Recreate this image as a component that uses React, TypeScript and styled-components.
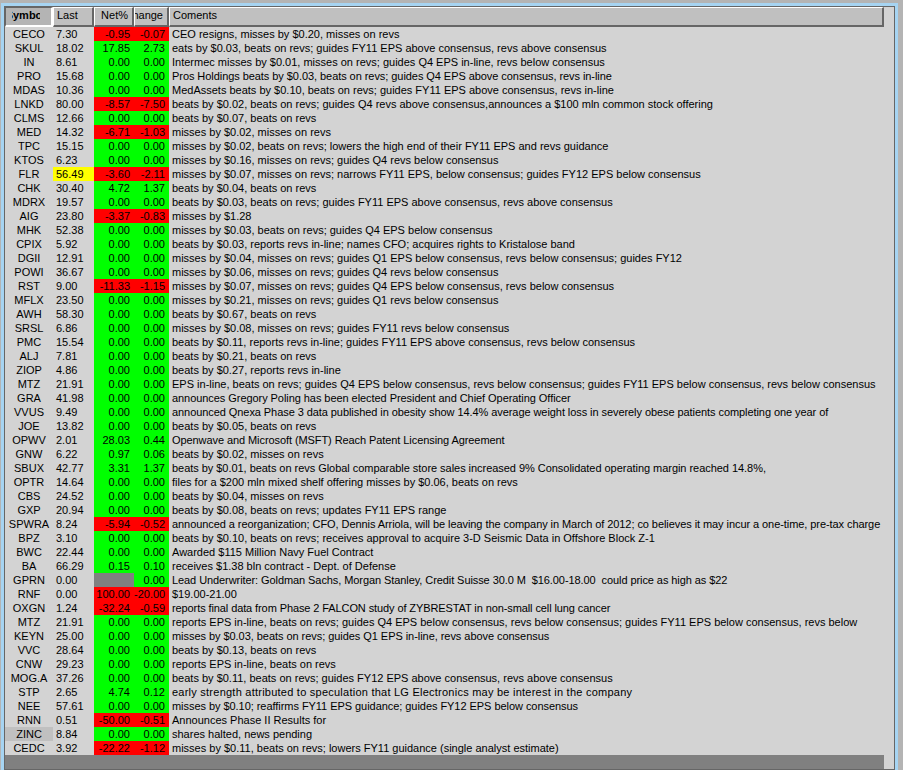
import React from 'react';
import styled, { createGlobalStyle } from 'styled-components';

type Tone = 'up' | 'down';

interface Quote {
  symbol: string;
  last: string;
  net: string;
  change: string;
  comment: string;
  tone?: Tone;
  netGray?: boolean;
  flagLast?: boolean;
  flagSymbol?: boolean;
  track?: number;
}

const q = (
  symbol: string,
  last: string,
  comment: string,
  net = '0.00',
  change = '0.00',
  extra: Partial<Quote> = {}
): Quote => ({
  symbol,
  last,
  comment,
  net,
  change,
  tone: net.startsWith('-') ? 'down' : 'up',
  ...extra,
});

const quotes: Quote[] = [
  q('CECO', '7.30', 'CEO resigns, misses by $0.20, misses on revs', '-0.95', '-0.07'),
  q('SKUL', '18.02', 'eats by $0.03, beats on revs; guides FY11 EPS above consensus, revs above consensus', '17.85', '2.73'),
  q('IN', '8.61', 'Intermec misses by $0.01, misses on revs; guides Q4 EPS in-line, revs below consensus'),
  q('PRO', '15.68', 'Pros Holdings beats by $0.03, beats on revs; guides Q4 EPS above consensus, revs in-line', '0.00', '0.00', { track: -0.06 }),
  q('MDAS', '10.36', 'MedAssets beats by $0.10, beats on revs; guides FY11 EPS above consensus, revs in-line'),
  q('LNKD', '80.00', 'beats by $0.02, beats on revs; guides Q4 revs above consensus,announces a $100 mln common stock offering', '-8.57', '-7.50'),
  q('CLMS', '12.66', 'beats by $0.07, beats on revs'),
  q('MED', '14.32', 'misses by $0.02, misses on revs', '-6.71', '-1.03'),
  q('TPC', '15.15', 'misses by $0.02, beats on revs; lowers the high end of their FY11 EPS and revs guidance'),
  q('KTOS', '6.23', 'misses by $0.16, misses on revs; guides Q4 revs below consensus'),
  q('FLR', '56.49', 'misses by $0.07, misses on revs; narrows FY11 EPS, below consensus; guides FY12 EPS below consensus', '-3.60', '-2.11', { flagLast: true }),
  q('CHK', '30.40', 'beats by $0.04, beats on revs', '4.72', '1.37'),
  q('MDRX', '19.57', 'beats by $0.03, beats on revs; guides FY11 EPS above consensus, revs above consensus'),
  q('AIG', '23.80', 'misses by $1.28', '-3.37', '-0.83'),
  q('MHK', '52.38', 'misses by $0.03, beats on revs; guides Q4 EPS below consensus'),
  q('CPIX', '5.92', 'beats by $0.03, reports revs in-line; names CFO; acquires rights to Kristalose band'),
  q('DGII', '12.91', 'misses by $0.04, misses on revs; guides Q1 EPS below consensus, revs below consensus; guides FY12'),
  q('POWI', '36.67', 'misses by $0.06, misses on revs; guides Q4 revs below consensus'),
  q('RST', '9.00', 'misses by $0.07, misses on revs; guides Q4 EPS below consensus, revs below consensus', '-11.33', '-1.15'),
  q('MFLX', '23.50', 'misses by $0.21, misses on revs; guides Q1 revs below consensus'),
  q('AWH', '58.30', 'beats by $0.67, beats on revs'),
  q('SRSL', '6.86', 'misses by $0.08, misses on revs; guides FY11 revs below consensus'),
  q('PMC', '15.54', 'beats by $0.11, reports revs in-line; guides FY11 EPS above consensus, revs below consensus'),
  q('ALJ', '7.81', 'beats by $0.21, beats on revs'),
  q('ZIOP', '4.86', 'beats by $0.27, reports revs in-line'),
  q('MTZ', '21.91', 'EPS in-line, beats on revs; guides Q4 EPS below consensus, revs below consensus; guides FY11 EPS below consensus, revs below consensus'),
  q('GRA', '41.98', 'announces Gregory Poling has been elected President and Chief Operating Officer', '0.00', '0.00', { track: -0.06 }),
  q('VVUS', '9.49', 'announced Qnexa Phase 3 data published in obesity show 14.4% average weight loss in severely obese patients completing one year of', '0.00', '0.00', { track: -0.07 }),
  q('JOE', '13.82', 'beats by $0.05, beats on revs'),
  q('OPWV', '2.01', 'Openwave and Microsoft (MSFT) Reach Patent Licensing Agreement', '28.03', '0.44', { track: -0.08 }),
  q('GNW', '6.22', 'beats by $0.02, misses on revs', '0.97', '0.06'),
  q('SBUX', '42.77', 'beats by $0.01, beats on revs Global comparable store sales increased 9% Consolidated operating margin reached 14.8%,', '3.31', '1.37', { track: -0.04 }),
  q('OPTR', '14.64', 'files for a $200 mln mixed shelf offering misses by $0.06, beats on revs'),
  q('CBS', '24.52', 'beats by $0.04, misses on revs'),
  q('GXP', '20.94', 'beats by $0.08, beats on revs; updates FY11 EPS range'),
  q('SPWRA', '8.24', 'announced a reorganization; CFO, Dennis Arriola, will be leaving the company in March of 2012; co believes it may incur a one-time, pre-tax charge', '-5.94', '-0.52', { track: -0.07 }),
  q('BPZ', '3.10', 'beats by $0.10, beats on revs; receives approval to acquire 3-D Seismic Data in Offshore Block Z-1'),
  q('BWC', '22.44', 'Awarded $115 Million Navy Fuel Contract'),
  q('BA', '66.29', 'receives $1.38 bln contract - Dept. of Defense', '0.15', '0.10'),
  q('GPRN', '0.00', 'Lead Underwriter: Goldman Sachs, Morgan Stanley, Credit Suisse 30.0 M  $16.00-18.00  could price as high as $22', '', '0.00', { netGray: true, track: -0.08 }),
  q('RNF', '0.00', '$19.00-21.00', '100.00', '-20.00', { tone: 'down' }),
  q('OXGN', '1.24', 'reports final data from Phase 2 FALCON study of ZYBRESTAT in non-small cell lung cancer', '-32.24', '-0.59', { track: -0.1 }),
  q('MTZ', '21.91', 'reports EPS in-line, beats on revs; guides Q4 EPS below consensus, revs below consensus; guides FY11 EPS below consensus, revs below'),
  q('KEYN', '25.00', 'misses by $0.03, beats on revs; guides Q1 EPS in-line, revs above consensus', '0.00', '0.00', { track: -0.05 }),
  q('VVC', '28.64', 'beats by $0.13, beats on revs'),
  q('CNW', '29.23', 'reports EPS in-line, beats on revs'),
  q('MOG.A', '37.26', 'beats by $0.11, beats on revs; guides FY12 EPS above consensus, revs above consensus'),
  q('STP', '2.65', 'early strength attributed to speculation that LG Electronics may be interest in the company', '4.74', '0.12', { track: 0.24 }),
  q('NEE', '57.61', 'misses by $0.10; reaffirms FY11 EPS guidance; guides FY12 EPS below consensus', '0.00', '0.00', { track: -0.05 }),
  q('RNN', '0.51', 'Announces Phase II Results for', '-50.00', '-0.51'),
  q('ZINC', '8.84', 'shares halted, news pending', '0.00', '0.00', { flagSymbol: true }),
  q('CEDC', '3.92', 'misses by $0.11, beats on revs; lowers FY11 guidance (single analyst estimate)', '-22.22', '-1.12'),
];

const toneColor = (tone?: Tone) => (tone === 'down' ? '#ff0000' : '#00ff00');

const App = (): JSX.Element => (
  <>
    <GlobalStyle />
    <Window>
      <Panel>
        <Grid>
          <HeaderRow>
            <HeaderCell $pressed $align="center">
              <SortLabel>Symbol</SortLabel>
            </HeaderCell>
            <HeaderCell $align="flex-start">Last</HeaderCell>
            <HeaderCell $align="flex-end">Net%</HeaderCell>
            <HeaderCell $align="flex-end">Change</HeaderCell>
            <HeaderCell $align="flex-start">Coments</HeaderCell>
          </HeaderRow>
          {quotes.map((row, i) => (
            <Row key={`${row.symbol}-${i}`}>
              <SymbolCell $flag={row.flagSymbol}>{row.symbol}</SymbolCell>
              <LastCell $flag={row.flagLast}>{row.last}</LastCell>
              <NumCell $bg={row.netGray ? '#808080' : toneColor(row.tone)}>{row.net}</NumCell>
              <NumCell $bg={toneColor(row.tone)}>{row.change}</NumCell>
              <CommentCell $track={row.track ?? 0}>{row.comment}</CommentCell>
            </Row>
          ))}
          <Footer />
        </Grid>
      </Panel>
    </Window>
  </>
);

export default App;

const GlobalStyle = createGlobalStyle`
  html, body {
    margin: 0;
    height: 100%;
    background: #b4b4b4;
    overflow: hidden;
  }
  * {
    box-sizing: border-box;
  }
`;

const Window = styled.div`
  width: 897px;
  height: 770px;
  margin-left: 1px;
  padding-top: 3px;
`;

const Panel = styled.div`
  height: 767px;
  background: #d3d3d3;
  border: 3px solid #a6d4f2;
  border-bottom: none;
  box-shadow: inset 0 0 0 1px #666666;
  padding: 1px 11px 0 1px;
`;

const Grid = styled.div`
  font-family: 'Liberation Sans', Arial, sans-serif;
  font-size: 11px;
  line-height: 14px;
  color: #000;
`;

const columns = '48px 41px 40px 35px 1fr';

const HeaderRow = styled.div`
  display: grid;
  grid-template-columns: ${columns};
  height: 20px;
`;

const HeaderCell = styled.div<{ $pressed?: boolean; $align: string }>`
  display: flex;
  align-items: center;
  justify-content: ${({ $align }) => $align};
  overflow: hidden;
  white-space: nowrap;
  padding: 0 4px 3px 3px;
  background: ${({ $pressed }) => ($pressed ? '#b4b4b4' : '#c0c0c0')};
  border-style: solid;
  border-width: 1px 2px 2px 1px;
  border-color: ${({ $pressed }) =>
    $pressed ? '#666666 #ffffff #ffffff #666666' : '#ffffff #666666 #666666 #ffffff'};
`;

const SortLabel = styled.span`
  display: flex;
  justify-content: center;
  flex: 0 0 28px;
  margin-left: -5px;
  overflow: hidden;
  font-weight: bold;
`;

const Row = styled.div`
  display: grid;
  grid-template-columns: ${columns};
  height: 14px;
`;

const SymbolCell = styled.div<{ $flag?: boolean }>`
  text-align: center;
  background: ${({ $flag }) => ($flag ? '#c0c0c0' : 'transparent')};
`;

const LastCell = styled.div<{ $flag?: boolean }>`
  padding-left: 3px;
  background: ${({ $flag }) => ($flag ? '#ffff00' : 'transparent')};
`;

const NumCell = styled.div<{ $bg: string }>`
  text-align: right;
  padding-right: 4px;
  white-space: nowrap;
  overflow: hidden;
  background: ${({ $bg }) => $bg};
`;

const CommentCell = styled.div<{ $track: number }>`
  padding-left: 3px;
  white-space: pre;
  letter-spacing: ${({ $track }) => $track}px;
`;

const Footer = styled.div`
  height: 14px;
  background: #808080;
`;
